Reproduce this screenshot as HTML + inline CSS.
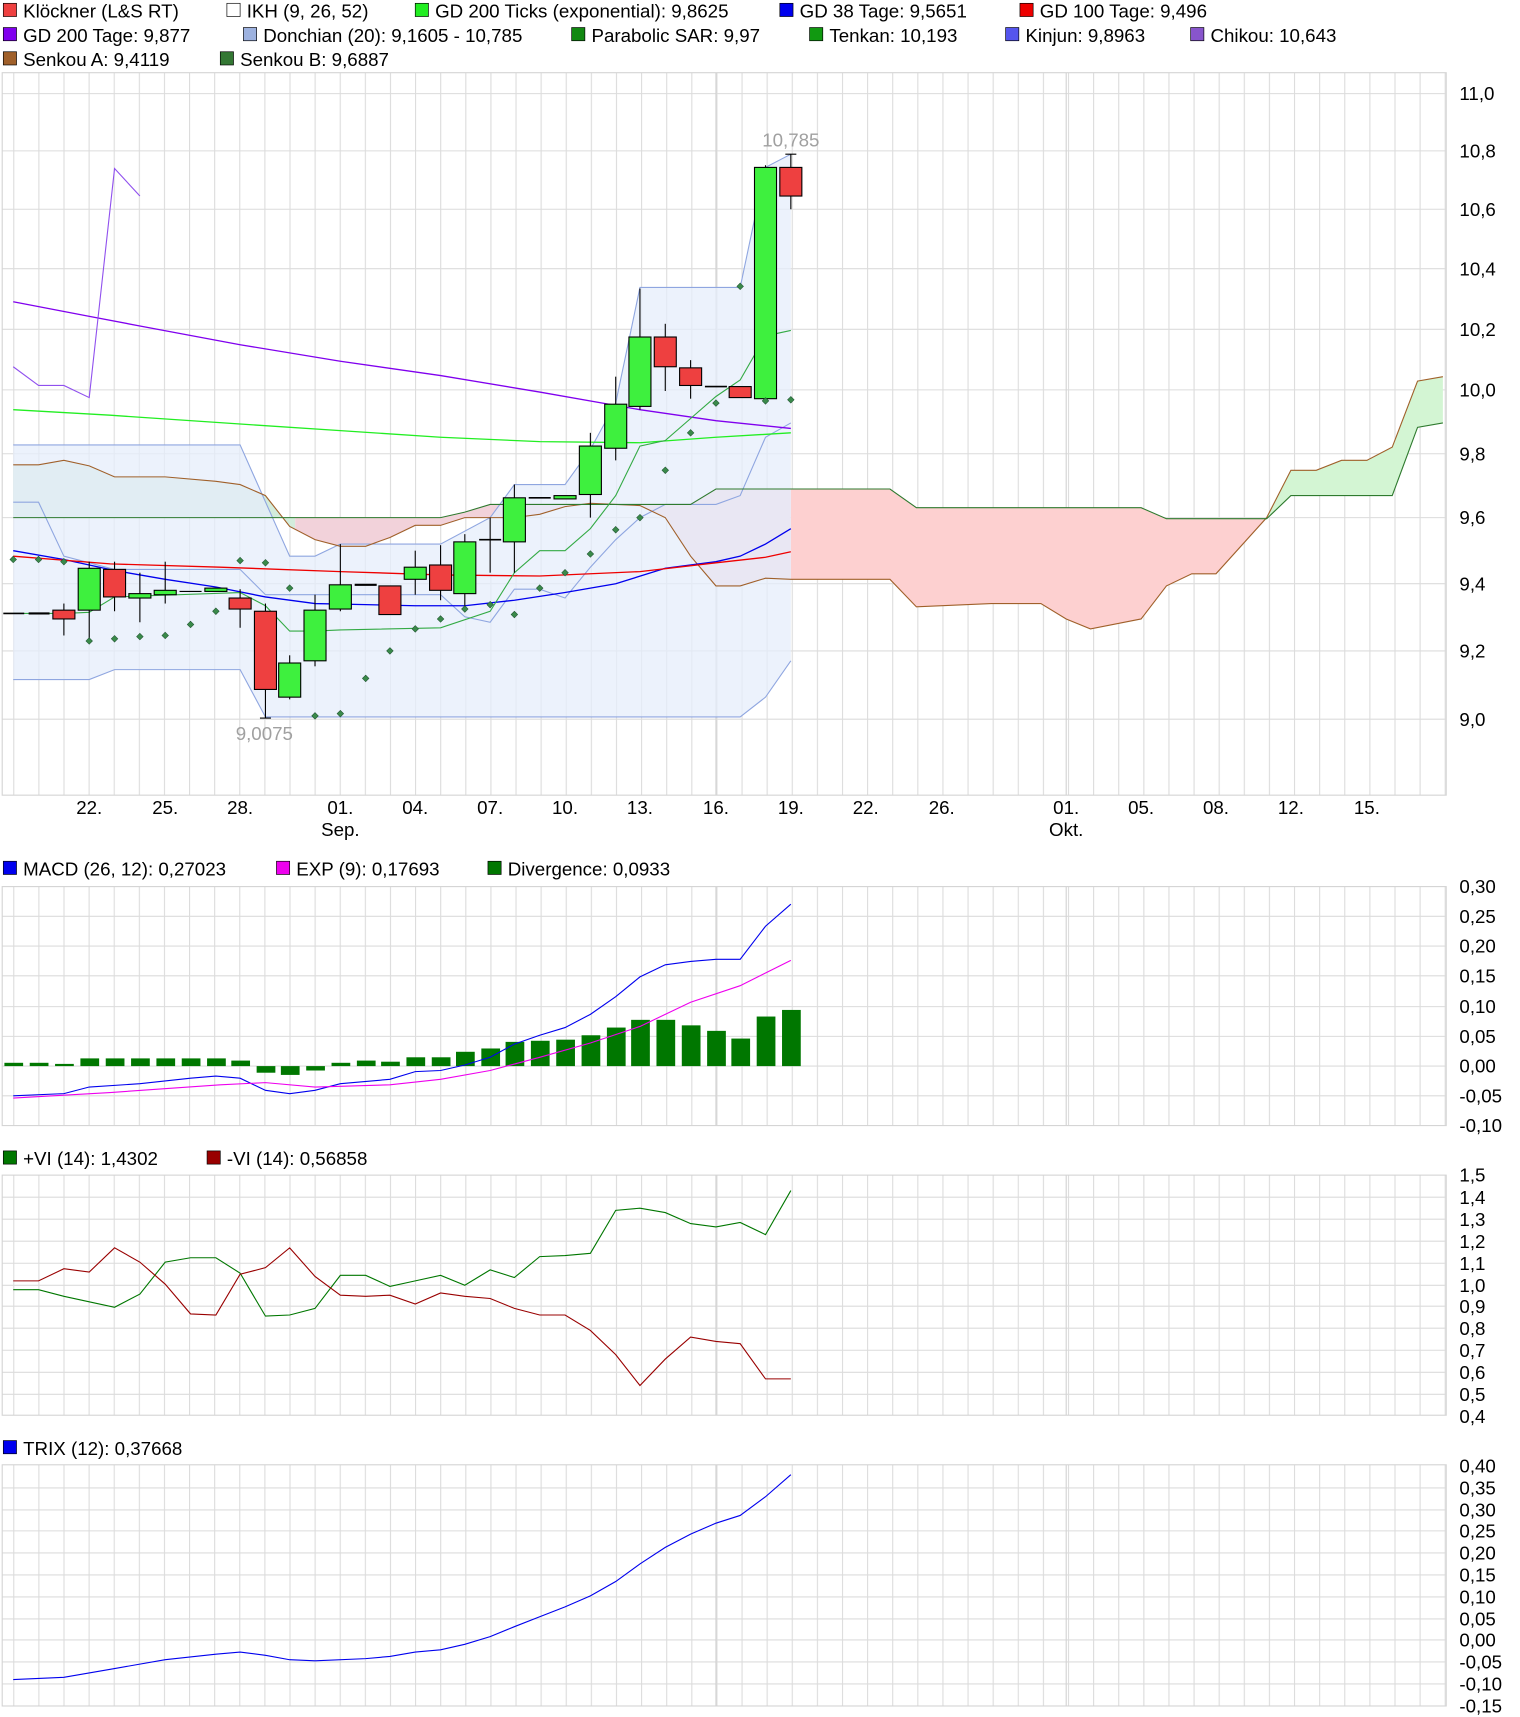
<!DOCTYPE html>
<html><head><meta charset="utf-8"><style>
html,body{margin:0;padding:0;background:#fff;}
svg{display:block;}
text{font-family:"Liberation Sans",sans-serif;}
</style></head><body>
<svg width="1520" height="1717" viewBox="0 0 1380 1559" preserveAspectRatio="none" xmlns="http://www.w3.org/2000/svg">
<defs>
<pattern id="vg" x="12" y="0" width="22.8" height="10" patternUnits="userSpaceOnUse">
<line x1="0.5" y1="0" x2="0.5" y2="10" stroke="#dcdcdc" stroke-width="1"/>
</pattern>
<clipPath id="cg"><rect x="0" y="0" width="268" height="800"/><rect x="1150" y="0" width="200" height="800"/></clipPath>
<clipPath id="cr"><rect x="268" y="0" width="882" height="800"/></clipPath>
<clipPath id="cl"><rect x="0" y="0" width="718" height="800"/></clipPath>
<clipPath id="crt"><rect x="718" y="0" width="700" height="800"/></clipPath>
</defs>
<g font-size="17" fill="#000">
<rect x="3" y="3" width="12" height="12" fill="#ee4040" stroke="#000" stroke-width="0.6"/><text x="21" y="16">Klöckner (L&amp;S RT)</text>
<rect x="206" y="3" width="12" height="12" fill="#fff" stroke="#000" stroke-width="0.6"/><text x="224" y="16">IKH (9, 26, 52)</text>
<rect x="377" y="3" width="12" height="12" fill="#22ee22" stroke="#000" stroke-width="0.6"/><text x="395" y="16">GD 200 Ticks (exponential): 9,8625</text>
<rect x="708" y="3" width="12" height="12" fill="#0000ee" stroke="#000" stroke-width="0.6"/><text x="726" y="16">GD 38 Tage: 9,5651</text>
<rect x="926" y="3" width="12" height="12" fill="#ee0000" stroke="#000" stroke-width="0.6"/><text x="944" y="16">GD 100 Tage: 9,496</text>
<rect x="3" y="25" width="12" height="12" fill="#8000ee" stroke="#000" stroke-width="0.6"/><text x="21" y="38">GD 200 Tage: 9,877</text>
<rect x="221" y="25" width="12" height="12" fill="#9db2e0" stroke="#000" stroke-width="0.6"/><text x="239" y="38">Donchian (20): 9,1605 - 10,785</text>
<rect x="519" y="25" width="12" height="12" fill="#118811" stroke="#000" stroke-width="0.6"/><text x="537" y="38">Parabolic SAR: 9,97</text>
<rect x="735" y="25" width="12" height="12" fill="#119911" stroke="#000" stroke-width="0.6"/><text x="753" y="38">Tenkan: 10,193</text>
<rect x="913" y="25" width="12" height="12" fill="#5555ee" stroke="#000" stroke-width="0.6"/><text x="931" y="38">Kinjun: 9,8963</text>
<rect x="1081" y="25" width="12" height="12" fill="#8855cc" stroke="#000" stroke-width="0.6"/><text x="1099" y="38">Chikou: 10,643</text>
<rect x="3" y="47" width="12" height="12" fill="#a0602a" stroke="#000" stroke-width="0.6"/><text x="21" y="60">Senkou A: 9,4119</text>
<rect x="200" y="47" width="12" height="12" fill="#337733" stroke="#000" stroke-width="0.6"/><text x="218" y="60">Senkou B: 9,6887</text>
</g>

<rect x="2" y="66" width="1311" height="656" fill="url(#vg)"/>
<g stroke="#dcdcdc" stroke-width="1">
<line x1="2" y1="85" x2="1313" y2="85"/><line x1="2" y1="137" x2="1313" y2="137"/><line x1="2" y1="190" x2="1313" y2="190"/><line x1="2" y1="244" x2="1313" y2="244"/><line x1="2" y1="299" x2="1313" y2="299"/><line x1="2" y1="354" x2="1313" y2="354"/><line x1="2" y1="412" x2="1313" y2="412"/><line x1="2" y1="470" x2="1313" y2="470"/><line x1="2" y1="530" x2="1313" y2="530"/><line x1="2" y1="591" x2="1313" y2="591"/><line x1="2" y1="653" x2="1313" y2="653"/>
</g>
<g stroke="#d2d2d2"><line x1="650" y1="66" x2="650" y2="722"/><line x1="968" y1="66" x2="968" y2="722"/></g>
<rect x="2" y="66" width="1311" height="656" fill="none" stroke="#d4d4d4"/>

<g clip-path="url(#cl)">
<polygon clip-path="url(#cg)" fill="#d3ecdc" points="12,422 35,422 58,418 81,423 104,433 150,433 196,437 218,440 241,450 263,478 286,490 286,470 12,470"/>
<polygon clip-path="url(#cr)" fill="#f2d2da" points="263,478 286,490 309,496 332,496 354,488 377,477 400,477 422,470 445,470 467,470 490,467 513,460 536,457 559,458 581,459 604,470 627,505 650,532 672,532 695,525 718,526 718,444 650,444 627,458 445,458 422,465 400,470 263,470"/>
</g>
<g clip-path="url(#crt)">
<polygon clip-path="url(#cr)" fill="#fdd0d0" points="718,526 808,526 832,551 900,548 945,548 968,562 990,571 1036,562 1059,532 1082,521 1104,521 1150,470 1150,471 1059,471 1036,461 832,461 808,444 718,444"/>
<polygon clip-path="url(#cg)" fill="#d3f5d3" points="1150,470 1172,427 1195,427 1218,418 1241,418 1264,406 1287,346 1310,342 1310,384 1287,388 1264,450 1172,450 1150,471"/>
</g>
<polygon fill="#e6edfb" fill-opacity="0.75" stroke="none" points="12,404 218,404 263,505 286,505 309,494 400,494 445,470 467,440 513,440 536,408 559,366 581,261 672,261 695,152 718,140 718,600 695,633 672,651 241,651 218,608 104,608 81,617 12,617"/>
<polyline fill="none" stroke="#8fa6e0" stroke-width="1" points="12,404 218,404 263,505 286,505 309,494 400,494 445,470 467,440 513,440 536,408 559,366 581,261 672,261 695,152 718,140"/>
<polyline fill="none" stroke="#8fa6e0" stroke-width="1" points="12,617 81,617 104,608 218,608 241,651 672,651 695,633 718,600"/>
<polyline fill="none" stroke="#8fa6e0" stroke-width="1" points="12,456 35,456 58,505 104,517 218,517 241,540 400,540 422,560 445,565 467,535 490,535 513,543 536,515 559,490 581,470 604,458 650,458 672,450 695,397 718,384"/>
<polyline fill="none" stroke="#a0602a" stroke-width="1" points="12,422 35,422 58,418 81,423 104,433 150,433 196,437 218,440 241,450 263,478 286,490 309,496 332,496 354,488 377,477 400,477 422,470 445,470 467,470 490,467 513,460 536,457 559,458 581,459 604,470 627,505 650,532 672,532 695,525 718,526 808,526 832,551 900,548 945,548 968,562 990,571 1036,562 1059,532 1082,521 1104,521 1150,470 1172,427 1195,427 1218,418 1241,418 1264,406 1287,346 1310,342"/>
<polyline fill="none" stroke="#2e7a2e" stroke-width="1" points="12,470 400,470 422,465 445,458 627,458 650,444 808,444 832,461 1036,461 1059,471 1150,471 1172,450 1264,450 1287,388 1310,384"/>
<polyline fill="none" stroke="#8000ee" stroke-width="1.2" points="12,274 80,287 127,296 218,313 309,328 400,341 490,356 581,372 650,382 718,389"/>
<polyline fill="none" stroke="#9050ee" stroke-width="1" points="12,333 35,350 58,350 81,361 104,153 127,178"/>
<polyline fill="none" stroke="#22ee22" stroke-width="1.2" points="12,372 100,377 218,385 309,391 400,397 490,401 581,402 650,397 718,393"/>
<polyline fill="none" stroke="#0000ee" stroke-width="1.2" points="12,500 58,508 104,518 150,526 196,533 241,542 286,548 332,549 377,550 422,550 467,545 513,538 559,530 604,516 650,510 672,505 695,494 718,480"/>
<polyline fill="none" stroke="#ee0000" stroke-width="1.2" points="12,505 100,512 200,515 309,519 400,522 490,523 581,519 650,511 695,506 718,501"/>
<polyline fill="none" stroke="#33aa44" stroke-width="1" points="12,557 58,557 81,556 104,542 218,538 241,550 263,573 286,573 309,572 400,570 445,555 467,520 490,500 513,500 536,480 559,450 581,405 604,400 627,380 650,360 672,345 695,305 718,300"/>
<g stroke="#000" stroke-width="1">
<line x1="58" y1="548" x2="58" y2="577"/><line x1="81" y1="510" x2="81" y2="580"/><line x1="104" y1="510" x2="104" y2="555"/><line x1="127" y1="520" x2="127" y2="565"/><line x1="150" y1="510" x2="150" y2="548"/><line x1="218" y1="535" x2="218" y2="570"/><line x1="241" y1="548" x2="241" y2="652"/><line x1="263" y1="595" x2="263" y2="635"/><line x1="286" y1="540" x2="286" y2="605"/><line x1="309" y1="494" x2="309" y2="555"/><line x1="377" y1="500" x2="377" y2="540"/><line x1="400" y1="495" x2="400" y2="545"/><line x1="422" y1="485" x2="422" y2="555"/><line x1="445" y1="470" x2="445" y2="520"/><line x1="467" y1="440" x2="467" y2="520"/><line x1="536" y1="393" x2="536" y2="470"/><line x1="559" y1="342" x2="559" y2="418"/><line x1="581" y1="262" x2="581" y2="372"/><line x1="604" y1="294" x2="604" y2="355"/><line x1="627" y1="327" x2="627" y2="362"/><line x1="695" y1="150" x2="695" y2="365"/><line x1="718" y1="140" x2="718" y2="190"/>
<line x1="236" y1="652" x2="246" y2="652"/><line x1="713" y1="140" x2="723" y2="140"/>
<line x1="3" y1="557" x2="22" y2="557" stroke-width="1.5"/><line x1="26" y1="557" x2="45" y2="557" stroke-width="2"/><line x1="163" y1="537" x2="183" y2="537"/><line x1="322" y1="531" x2="342" y2="531" stroke-width="2"/><line x1="435" y1="490" x2="455" y2="490" stroke-width="1.5"/><line x1="480" y1="452" x2="500" y2="452" stroke-width="1.5"/><line x1="640" y1="351" x2="660" y2="351" stroke-width="1.5"/>
</g>
<g stroke="#000" stroke-width="1">
<rect x="48" y="554" width="20" height="8" fill="#ee4040"/>
<rect x="71" y="516" width="20" height="38" fill="#3ef03e"/>
<rect x="94" y="517" width="20" height="25" fill="#ee4040"/>
<rect x="117" y="539" width="20" height="4" fill="#3ef03e"/>
<rect x="140" y="536" width="20" height="4" fill="#3ef03e"/>
<rect x="186" y="534" width="20" height="3" fill="#3ef03e"/>
<rect x="208" y="543" width="20" height="10" fill="#ee4040"/>
<rect x="231" y="555" width="20" height="71" fill="#ee4040"/>
<rect x="253" y="602" width="20" height="31" fill="#3ef03e"/>
<rect x="276" y="554" width="20" height="46" fill="#3ef03e"/>
<rect x="299" y="531" width="20" height="22" fill="#3ef03e"/>
<rect x="344" y="532" width="20" height="26" fill="#ee4040"/>
<rect x="367" y="515" width="20" height="11" fill="#3ef03e"/>
<rect x="390" y="513" width="20" height="23" fill="#ee4040"/>
<rect x="412" y="492" width="20" height="47" fill="#3ef03e"/>
<rect x="457" y="452" width="20" height="40" fill="#3ef03e"/>
<rect x="503" y="450" width="20" height="3" fill="#3ef03e"/>
<rect x="526" y="405" width="20" height="44" fill="#3ef03e"/>
<rect x="549" y="367" width="20" height="40" fill="#3ef03e"/>
<rect x="571" y="306" width="20" height="63" fill="#3ef03e"/>
<rect x="594" y="306" width="20" height="27" fill="#ee4040"/>
<rect x="617" y="334" width="20" height="16" fill="#ee4040"/>
<rect x="662" y="351" width="20" height="10" fill="#ee4040"/>
<rect x="685" y="152" width="20" height="210" fill="#3ef03e"/>
<rect x="708" y="152" width="20" height="26" fill="#ee4040"/>
</g>
<g fill="#3a8a4a" stroke="#225533" stroke-width="0.5">
<path d="M12,505l3,3l-3,3l-3,-3z M35,505l3,3l-3,3l-3,-3z M58,507l3,3l-3,3l-3,-3z M81,579l3,3l-3,3l-3,-3z M104,577l3,3l-3,3l-3,-3z M127,575l3,3l-3,3l-3,-3z M150,574l3,3l-3,3l-3,-3z M173,564l3,3l-3,3l-3,-3z M196,552l3,3l-3,3l-3,-3z M218,506l3,3l-3,3l-3,-3z M241,508l3,3l-3,3l-3,-3z M263,531l3,3l-3,3l-3,-3z M286,647l3,3l-3,3l-3,-3z M309,645l3,3l-3,3l-3,-3z M332,613l3,3l-3,3l-3,-3z M354,588l3,3l-3,3l-3,-3z M377,568l3,3l-3,3l-3,-3z M400,559l3,3l-3,3l-3,-3z M422,550l3,3l-3,3l-3,-3z M445,546l3,3l-3,3l-3,-3z M467,555l3,3l-3,3l-3,-3z M490,531l3,3l-3,3l-3,-3z M513,517l3,3l-3,3l-3,-3z M536,500l3,3l-3,3l-3,-3z M559,478l3,3l-3,3l-3,-3z M581,467l3,3l-3,3l-3,-3z M604,424l3,3l-3,3l-3,-3z M627,390l3,3l-3,3l-3,-3z M650,363l3,3l-3,3l-3,-3z M672,257l3,3l-3,3l-3,-3z M695,361l3,3l-3,3l-3,-3z M718,360l3,3l-3,3l-3,-3z"/>
</g>
<g font-size="17" fill="#a0a0a0" text-anchor="middle"><text x="718" y="133">10,785</text><text x="240" y="672">9,0075</text></g>
<g font-size="17" fill="#000">
<text x="1325" y="91">11,0</text><text x="1325" y="143">10,8</text><text x="1325" y="196">10,6</text><text x="1325" y="250">10,4</text><text x="1325" y="305">10,2</text><text x="1325" y="360">10,0</text><text x="1325" y="418">9,8</text><text x="1325" y="476">9,6</text><text x="1325" y="536">9,4</text><text x="1325" y="597">9,2</text><text x="1325" y="659">9,0</text>
</g>
<g font-size="17" fill="#000" text-anchor="middle">
<text x="81" y="739">22.</text><text x="150" y="739">25.</text><text x="218" y="739">28.</text><text x="309" y="739">01.</text><text x="309" y="759">Sep.</text><text x="377" y="739">04.</text><text x="445" y="739">07.</text><text x="513" y="739">10.</text><text x="581" y="739">13.</text><text x="650" y="739">16.</text><text x="718" y="739">19.</text><text x="786" y="739">22.</text><text x="855" y="739">26.</text><text x="968" y="739">01.</text><text x="968" y="759">Okt.</text><text x="1036" y="739">05.</text><text x="1104" y="739">08.</text><text x="1172" y="739">12.</text><text x="1241" y="739">15.</text>
</g>

<g font-size="17" fill="#000">
<rect x="3" y="782" width="12" height="12" fill="#0000ee" stroke="#000" stroke-width="0.6"/><text x="21" y="795">MACD (26, 12): 0,27023</text>
<rect x="251" y="782" width="12" height="12" fill="#ee00ee" stroke="#000" stroke-width="0.6"/><text x="269" y="795">EXP (9): 0,17693</text>
<rect x="443" y="782" width="12" height="12" fill="#007700" stroke="#000" stroke-width="0.6"/><text x="461" y="795">Divergence: 0,0933</text>
</g>
<rect x="2" y="805" width="1311" height="217" fill="url(#vg)"/>
<g stroke="#dcdcdc"><line x1="2" y1="832" x2="1313" y2="832"/><line x1="2" y1="859" x2="1313" y2="859"/><line x1="2" y1="886" x2="1313" y2="886"/><line x1="2" y1="914" x2="1313" y2="914"/><line x1="2" y1="941" x2="1313" y2="941"/><line x1="2" y1="968" x2="1313" y2="968"/><line x1="2" y1="995" x2="1313" y2="995"/></g>
<g stroke="#d2d2d2"><line x1="650" y1="805" x2="650" y2="1022"/><line x1="968" y1="805" x2="968" y2="1022"/></g>
<rect x="2" y="805" width="1311" height="217" fill="none" stroke="#d4d4d4"/>
<g fill="#007700">
<rect x="4" y="965" width="17" height="3"/><rect x="27" y="965" width="17" height="3"/><rect x="50" y="966" width="17" height="2"/><rect x="73" y="961" width="17" height="7"/><rect x="96" y="961" width="17" height="7"/><rect x="119" y="961" width="17" height="7"/><rect x="142" y="961" width="17" height="7"/><rect x="165" y="961" width="17" height="7"/><rect x="188" y="961" width="17" height="7"/><rect x="210" y="963" width="17" height="5"/><rect x="233" y="968" width="17" height="6"/><rect x="255" y="968" width="17" height="8"/><rect x="278" y="968" width="17" height="4"/><rect x="301" y="965" width="17" height="3"/><rect x="324" y="963" width="17" height="5"/><rect x="346" y="964" width="17" height="4"/><rect x="369" y="960" width="17" height="8"/><rect x="392" y="960" width="17" height="8"/><rect x="414" y="955" width="17" height="13"/><rect x="437" y="952" width="17" height="16"/><rect x="459" y="946" width="17" height="22"/><rect x="482" y="945" width="17" height="23"/><rect x="505" y="944" width="17" height="24"/><rect x="528" y="940" width="17" height="28"/><rect x="551" y="933" width="17" height="35"/><rect x="573" y="926" width="17" height="42"/><rect x="596" y="926" width="17" height="42"/><rect x="619" y="931" width="17" height="37"/><rect x="642" y="936" width="17" height="32"/><rect x="664" y="943" width="17" height="25"/><rect x="687" y="923" width="17" height="45"/><rect x="710" y="917" width="17" height="51"/>
</g>
<polyline fill="none" stroke="#0000ee" stroke-width="1" points="12,995 58,993 81,987 127,984 173,979 196,977 218,979 241,990 263,993 286,990 309,984 354,980 377,973 400,972 422,967 445,960 467,948 490,940 513,933 536,921 559,905 581,887 604,876 627,873 650,871 672,871 695,841 718,821"/>
<polyline fill="none" stroke="#ee00ee" stroke-width="1" points="12,997 100,992 200,985 241,983 286,987 354,985 400,980 445,972 490,960 536,947 581,932 627,910 672,895 718,872"/>
<g font-size="17" fill="#000">
<text x="1325" y="811">0,30</text><text x="1325" y="838">0,25</text><text x="1325" y="865">0,20</text><text x="1325" y="892">0,15</text><text x="1325" y="920">0,10</text><text x="1325" y="947">0,05</text><text x="1325" y="974">0,00</text><text x="1325" y="1001">-0,05</text><text x="1325" y="1028">-0,10</text>
</g>

<g font-size="17" fill="#000">
<rect x="3" y="1045" width="12" height="12" fill="#007700" stroke="#000" stroke-width="0.6"/><text x="21" y="1058">+VI (14): 1,4302</text>
<rect x="188" y="1045" width="12" height="12" fill="#990000" stroke="#000" stroke-width="0.6"/><text x="206" y="1058">-VI (14): 0,56858</text>
</g>
<rect x="2" y="1067" width="1311" height="218" fill="url(#vg)"/>
<g stroke="#dcdcdc"><line x1="2" y1="1087" x2="1313" y2="1087"/><line x1="2" y1="1107" x2="1313" y2="1107"/><line x1="2" y1="1127" x2="1313" y2="1127"/><line x1="2" y1="1147" x2="1313" y2="1147"/><line x1="2" y1="1167" x2="1313" y2="1167"/><line x1="2" y1="1186" x2="1313" y2="1186"/><line x1="2" y1="1206" x2="1313" y2="1206"/><line x1="2" y1="1226" x2="1313" y2="1226"/><line x1="2" y1="1246" x2="1313" y2="1246"/><line x1="2" y1="1266" x2="1313" y2="1266"/></g>
<g stroke="#d2d2d2"><line x1="650" y1="1067" x2="650" y2="1285"/><line x1="968" y1="1067" x2="968" y2="1285"/></g>
<rect x="2" y="1067" width="1311" height="218" fill="none" stroke="#d4d4d4"/>
<polyline fill="none" stroke="#007700" stroke-width="1" points="12,1171 35,1171 58,1177 81,1182 104,1187 127,1175 150,1146 173,1142 196,1142 218,1156 241,1195 263,1194 286,1188 309,1158 332,1158 354,1168 377,1163 400,1158 422,1167 445,1153 467,1160 490,1141 513,1140 536,1138 559,1099 581,1097 604,1101 627,1111 650,1114 672,1110 695,1121 718,1081"/>
<polyline fill="none" stroke="#990000" stroke-width="1" points="12,1163 35,1163 58,1152 81,1155 104,1133 127,1146 150,1166 173,1193 196,1194 218,1157 241,1151 263,1133 286,1159 309,1176 332,1177 354,1176 377,1184 400,1174 422,1177 445,1179 467,1188 490,1194 513,1194 536,1208 559,1230 581,1258 604,1234 627,1214 650,1218 672,1220 695,1252 718,1252"/>
<g font-size="17" fill="#000">
<text x="1325" y="1073">1,5</text><text x="1325" y="1093">1,4</text><text x="1325" y="1113">1,3</text><text x="1325" y="1133">1,2</text><text x="1325" y="1153">1,1</text><text x="1325" y="1173">1,0</text><text x="1325" y="1192">0,9</text><text x="1325" y="1212">0,8</text><text x="1325" y="1232">0,7</text><text x="1325" y="1252">0,6</text><text x="1325" y="1272">0,5</text><text x="1325" y="1292">0,4</text>
</g>

<g font-size="17" fill="#000">
<rect x="3" y="1308" width="12" height="12" fill="#0000ee" stroke="#000" stroke-width="0.6"/><text x="21" y="1321">TRIX (12): 0,37668</text>
</g>
<rect x="2" y="1330" width="1311" height="219" fill="url(#vg)"/>
<g stroke="#dcdcdc"><line x1="2" y1="1351" x2="1313" y2="1351"/><line x1="2" y1="1371" x2="1313" y2="1371"/><line x1="2" y1="1390" x2="1313" y2="1390"/><line x1="2" y1="1410" x2="1313" y2="1410"/><line x1="2" y1="1430" x2="1313" y2="1430"/><line x1="2" y1="1450" x2="1313" y2="1450"/><line x1="2" y1="1470" x2="1313" y2="1470"/><line x1="2" y1="1489" x2="1313" y2="1489"/><line x1="2" y1="1509" x2="1313" y2="1509"/><line x1="2" y1="1529" x2="1313" y2="1529"/></g>
<g stroke="#d2d2d2"><line x1="650" y1="1330" x2="650" y2="1549"/><line x1="968" y1="1330" x2="968" y2="1549"/></g>
<rect x="2" y="1330" width="1311" height="219" fill="none" stroke="#d4d4d4"/>
<polyline fill="none" stroke="#0000ee" stroke-width="1" points="12,1525 58,1523 104,1515 150,1507 196,1502 218,1500 241,1503 263,1507 286,1508 332,1506 354,1504 377,1500 400,1498 422,1493 445,1486 467,1477 490,1468 513,1459 536,1449 559,1436 581,1420 604,1405 627,1393 650,1383 672,1376 695,1359 718,1339"/>
<g font-size="17" fill="#000">
<text x="1325" y="1337">0,40</text><text x="1325" y="1357">0,35</text><text x="1325" y="1377">0,30</text><text x="1325" y="1396">0,25</text><text x="1325" y="1416">0,20</text><text x="1325" y="1436">0,15</text><text x="1325" y="1456">0,10</text><text x="1325" y="1476">0,05</text><text x="1325" y="1495">0,00</text><text x="1325" y="1515">-0,05</text><text x="1325" y="1535">-0,10</text><text x="1325" y="1555">-0,15</text>
</g>
</svg>
</body></html>
